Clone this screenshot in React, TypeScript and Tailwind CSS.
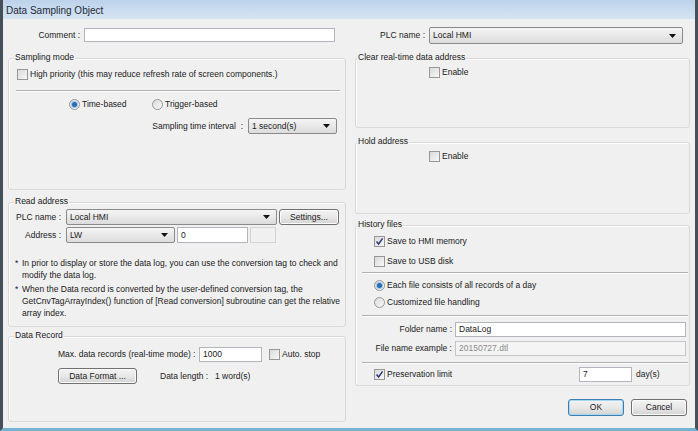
import React from 'react'

const Check = ({ checked = false }: { checked?: boolean }) => (
  <span className="flex size-[11px] shrink-0 items-center justify-center border border-[#979797] bg-linear-to-br from-[#dadada] to-[#f8f8f8]">
    {checked && (
      <svg viewBox="0 0 9 9" className="size-[9px]">
        <path d="M1.5 4.6 L3.6 7 L7.6 1.4" fill="none" stroke="#2b3a7a" strokeWidth="1.5" />
      </svg>
    )}
  </span>
)

const Radio = ({ on = false }: { on?: boolean }) => (
  <span className="flex size-[11px] shrink-0 items-center justify-center rounded-full border border-[#979797] bg-linear-to-br from-[#dadada] to-[#f8f8f8]">
    {on && <span className="size-[5px] rounded-full bg-[#2a6cb4] shadow-[0_0_0_1px_#9cc6ea]" />}
  </span>
)

const Select = ({ value, className }: { value: string; className: string }) => (
  <div className={`flex items-center justify-between rounded-[2px] border border-[#8a8a8a] bg-linear-to-b from-[#f5f5f5] to-[#dcdcdc] pl-[3px] pr-[6px] ${className}`}>
    <span>{value}</span>
    <svg viewBox="0 0 7 4" className="h-[4px] w-[7px]">
      <path d="M0 0h7L3.5 4z" fill="#111" />
    </svg>
  </div>
)

const Field = ({ value = '', className, disabled = false }: { value?: string; className: string; disabled?: boolean }) => (
  <div
    className={`flex items-center border pl-[3px] ${
      disabled ? 'border-[#c4c6ca] bg-[#f4f4f4] text-[#8c8c8c]' : 'border-[#b2b5bb] bg-white'
    } ${className}`}
  >
    {value}
  </div>
)

const Btn = ({ children, className, primary = false }: { children: React.ReactNode; className: string; primary?: boolean }) => (
  <div
    className={`flex items-center justify-center rounded-[3px] border bg-linear-to-b from-[#f3f3f3] via-[#e8e8e8] to-[#d3d3d3] ${
      primary ? 'border-[#3c7fb1] shadow-[inset_0_0_0_1px_#a6d8f2]' : 'border-[#707070] shadow-[inset_0_0_0_1px_#fbfbfb]'
    } ${className}`}
  >
    {children}
  </div>
)

const Group = ({ title, className, titleClass, children }: { title: string; className: string; titleClass: string; children?: React.ReactNode }) => (
  <div className={`flex flex-col rounded-[3px] border border-[#d9d9d9] shadow-[inset_1px_1px_0_#fff] ${className}`}>
    <div className={`-mt-[7px] w-fit bg-[#f0f0f0] px-[1px] ${titleClass}`}>{title}</div>
    {children}
  </div>
)

const Sep = ({ className }: { className: string }) => (
  <div className={`border-t border-b border-t-[#b0b0b0] border-b-white ${className}`} />
)

export default function App() {
  return (
    <div className="flex h-[431px] w-[698px] flex-col border-x-[3px] border-b-[3px] border-x-[#45505b] border-b-[#76b3d3] bg-[#f0f0f0] font-['Liberation_Sans',Arial,sans-serif] text-[8.5px] leading-[11px] text-[#1a1a1a]">
      <div className="flex h-[19px] shrink-0 items-center bg-linear-to-b from-[#bcd2ea] to-[#d6e4f3] pl-[3px] pt-[1px] text-[10px] text-[#1e2a36]">
        Data Sampling Object
      </div>

      <div className="flex gap-[9px] pl-[5px]">
        {/* left column */}
        <div className="flex w-[338px] flex-col">
          <div className="mt-[9px] flex h-[14px] items-center">
            <span className="w-[72px] text-right">Comment :</span>
            <Field className="ml-[4px] h-[14px] w-[251px]" />
          </div>

          <Group title="Sampling mode" className="mt-[16px] h-[132px]" titleClass="ml-[5px]">
            <div className="mt-[6px] ml-[8px] flex items-center gap-[2px]">
              <Check />
              <span>High priority (this may reduce refresh rate of screen components.)</span>
            </div>
            <Sep className="mt-[10px] ml-[7px] mr-[5px]" />
            <div className="mt-[7px] ml-[60px] flex items-center">
              <div className="flex w-[83px] items-center gap-[2px]">
                <Radio on />
                <span>Time-based</span>
              </div>
              <div className="flex items-center gap-[2px]">
                <Radio />
                <span>Trigger-based</span>
              </div>
            </div>
            <div className="mt-[8px] mr-[8px] flex items-center justify-end">
              <span>Sampling time interval&nbsp; :</span>
              <Select value="1 second(s)" className="ml-[5px] h-[16px] w-[89px]" />
            </div>
          </Group>

          <Group title="Read address" className="mt-[12px] h-[125px]" titleClass="ml-[5px]">
            <div className="mt-[2px] flex h-[16px] items-center">
              <span className="w-[52px] text-right">PLC name :</span>
              <Select value="Local HMI" className="ml-[5px] h-[16px] w-[211px]" />
              <Btn className="ml-[2px] h-[16px] w-[60px]">Settings...</Btn>
            </div>
            <div className="mt-[2px] flex h-[16px] items-center">
              <span className="w-[52px] text-right">Address :</span>
              <Select value="LW" className="ml-[5px] h-[16px] w-[109px]" />
              <Field value="0" className="ml-[2px] h-[16px] w-[71px]" />
              <div className="ml-[2px] h-[16px] w-[26px] border border-[#d4d4d4] bg-[#f0f0f0]" />
            </div>
            <div className="mt-[14px] flex pl-[6px] leading-[12px] whitespace-nowrap">
              <span className="w-[7px]">*</span>
              <span>
                In prior to display or store the data log, you can use the conversion tag to check and
                <br />
                modify the data log.
              </span>
            </div>
            <div className="mt-[2px] flex pl-[6px] leading-[12px] whitespace-nowrap">
              <span className="w-[7px]">*</span>
              <span>
                When the Data record is converted by the user-defined conversion tag, the
                <br />
                GetCnvTagArrayIndex() function of [Read conversion] subroutine can get the relative
                <br />
                array index.
              </span>
            </div>
          </Group>

          <Group title="Data Record" className="mt-[9px] h-[86px]" titleClass="ml-[5px]">
            <div className="mt-[6px] flex h-[15px] items-center pl-[49px]">
              <span className="w-[137px] whitespace-nowrap">Max. data records (real-time mode) :</span>
              <Field value="1000" className="ml-[4px] h-[15px] w-[63px]" />
              <span className="ml-[7px]">
                <Check />
              </span>
              <span className="ml-[2px]">Auto. stop</span>
            </div>
            <div className="mt-[6px] flex h-[16px] items-center pl-[49px]">
              <Btn className="h-[16px] w-[79px]">Data Format ...</Btn>
              <span className="ml-[23px] w-[55px]">Data length :</span>
              <span>1 word(s)</span>
            </div>
          </Group>
        </div>

        {/* right column */}
        <div className="flex w-[335px] flex-col">
          <div className="mt-[8px] flex h-[17px] items-center justify-end pr-[7px]">
            <span>PLC name :</span>
            <Select value="Local HMI" className="ml-[4px] h-[17px] w-[254px]" />
          </div>

          <Group title="Clear real-time data address" className="mt-[14px] h-[70px]" titleClass="ml-[1px]">
            <div className="mt-[4px] ml-[73px] flex items-center gap-[2px]">
              <Check />
              <span>Enable</span>
            </div>
          </Group>

          <Group title="Hold address" className="mt-[14px] h-[72px]" titleClass="ml-[1px]">
            <div className="mt-[4px] ml-[73px] flex items-center gap-[2px]">
              <Check />
              <span>Enable</span>
            </div>
          </Group>

          <Group title="History files" className="mt-[11px] h-[161px]" titleClass="ml-[1px]">
            <div className="mt-[6px] ml-[18px] flex items-center gap-[2px]">
              <Check checked />
              <span>Save to HMI memory</span>
            </div>
            <div className="mt-[9px] ml-[18px] flex items-center gap-[2px]">
              <Check />
              <span>Save to USB disk</span>
            </div>
            <Sep className="mt-[5px] ml-[6px] mr-[1px]" />
            <div className="mt-[6px] ml-[18px] flex items-center gap-[2px]">
              <Radio on />
              <span>Each file consists of all records of a day</span>
            </div>
            <div className="mt-[6px] ml-[18px] flex items-center gap-[2px]">
              <Radio />
              <span>Customized file handling</span>
            </div>
            <Sep className="mt-[7px] ml-[6px] mr-[1px]" />
            <div className="mt-[5px] mr-[3px] flex h-[15px] items-center justify-end">
              <span>Folder name :</span>
              <Field value="DataLog" className="ml-[3px] h-[15px] w-[231px]" />
            </div>
            <div className="mt-[4px] mr-[3px] flex h-[15px] items-center justify-end">
              <span>File name example :</span>
              <Field value="20150727.dtl" disabled className="ml-[3px] h-[15px] w-[231px]" />
            </div>
            <Sep className="mt-[6px] ml-[6px] mr-[1px]" />
            <div className="mt-[3px] ml-[18px] flex h-[15px] items-center">
              <Check checked />
              <span className="ml-[2px] w-[192px]">Preservation limit</span>
              <Field value="7" className="h-[15px] w-[53px]" />
              <span className="ml-[4px]">day(s)</span>
            </div>
          </Group>

          <div className="mt-[13px] mr-[3px] flex justify-end gap-[7px]">
            <Btn primary className="h-[17px] w-[56px]">OK</Btn>
            <Btn className="h-[17px] w-[56px]">Cancel</Btn>
          </div>
        </div>
      </div>
    </div>
  )
}
